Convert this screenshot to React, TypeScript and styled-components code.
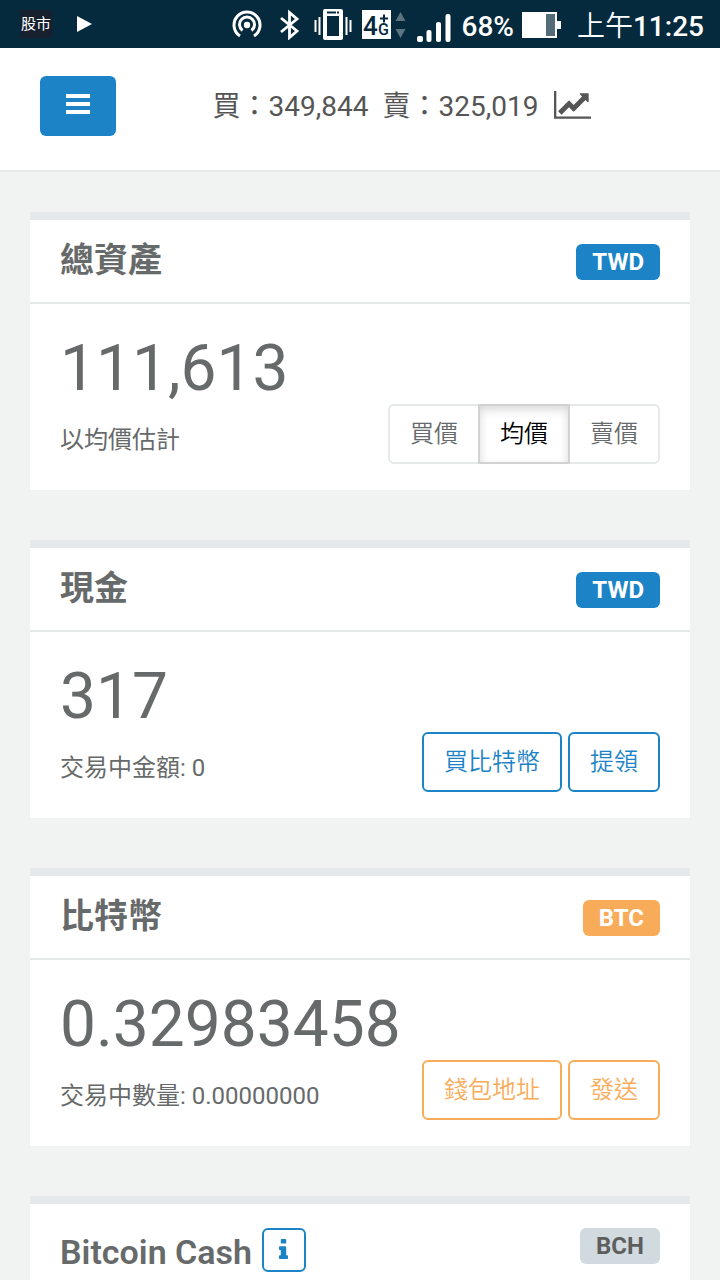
import React, { useState } from "react";
import styled, { createGlobalStyle, css } from "styled-components";

const GlobalStyle = createGlobalStyle`
  *, *::before, *::after { box-sizing: border-box; }
  html, body { margin: 0; padding: 0; height: 100%; }
  body {
    background: #f1f3f3;
    color: #676a6a;
    font-family: Roboto, "Noto Sans CJK TC", sans-serif;
    font-size: 24px;
  }
  #root { height: 100%; }
  button { font: inherit; margin: 0; cursor: pointer; }
  svg { display: block; flex: none; }
`;

const Screen = styled.div`
  height: 100%;
  overflow: hidden;
`;

const StatusBar = styled.div`
  display: flex;
  align-items: center;
  justify-content: space-between;
  height: 48px;
  padding: 0 16px 0 20px;
  background: #062a3d;
  color: #fff;
`;

const StatusGroup = styled.div<{ $gap: number }>`
  display: flex;
  align-items: center;
  gap: ${(p) => p.$gap}px;
`;

const StockBadge = styled.span`
  padding: 0 1px;
  background: #16202f;
  font-size: 15px;
  line-height: 28px;
`;

const StatusText = styled.span`
  font-size: 28px;
  font-weight: 500;
  line-height: 42px;
  padding-top: 6px;
`;

const Clock = styled(StatusText)`
  margin-left: 6px;
`;

const ClockPeriod = styled.span`
  font-weight: 350;
`;

const NavBar = styled.header`
  display: flex;
  padding: 28px 40px 34px;
  background: #fff;
  border-bottom: 2px solid #e5e9e9;
`;

const MenuButton = styled.button`
  display: flex;
  align-items: center;
  justify-content: center;
  width: 76px;
  height: 60px;
  padding: 0 0 4px;
  border: 0;
  border-radius: 6px;
  background: #1c84c6;
`;

const Ticker = styled.div`
  display: flex;
  flex: 1;
  align-items: center;
  justify-content: center;
  gap: 14px;
  padding: 2px 0 0 8px;
  color: #555;
  font-size: 28px;
  line-height: 36px;
`;

const ChartLink = styled.a`
  padding-left: 2px;
  color: #555;
`;

const Content = styled.main`
  display: flex;
  flex-direction: column;
  gap: 50px;
  padding: 40px 30px;
`;

const Card = styled.section`
  background: #fff;
  border-top: 8px solid #e5e9e9;
`;

const CardHeader = styled.div`
  display: flex;
  align-items: flex-start;
  justify-content: space-between;
  padding: 24px 30px 22px;
  border-bottom: 2px solid #e5e9e9;
`;

const TitleGroup = styled.div`
  display: flex;
  align-items: center;
  gap: 10px;
`;

const Title = styled.h2`
  margin: 0;
  font-size: 34px;
  font-weight: 600;
  line-height: 32px;
`;

const LatinTitle = styled(Title)`
  line-height: 40px;
  padding-top: 4px;
`;

const tones = {
  blue: { bg: "#1c84c6", fg: "#fff" },
  orange: { bg: "#f8ac59", fg: "#fff" },
  gray: { bg: "#d1dade", fg: "#5e5e5e" },
};

type Tone = keyof typeof tones;

const Badge = styled.span<{ $tone: Tone }>`
  height: 36px;
  padding: 0 16px;
  border-radius: 6px;
  background: ${(p) => tones[p.$tone].bg};
  color: ${(p) => tones[p.$tone].fg};
  font-size: 24px;
  font-weight: 700;
  line-height: 36px;
`;

const CardBody = styled.div`
  display: flex;
  align-items: flex-end;
  justify-content: space-between;
  padding: 30px 30px 26px;
`;

const Amount = styled.div`
  font-size: 64px;
  line-height: 70px;
`;

const Note = styled.div`
  margin-top: 12px;
  line-height: 48px;
`;

const Actions = styled.div`
  display: flex;
  gap: 6px;
`;

const buttonBox = css`
  height: 60px;
  padding: 0 20px 4px;
  border: 2px solid;
  background: #fff;
  font-family: "Noto Sans CJK TC", sans-serif;
  font-weight: 350;
  line-height: 52px;
  white-space: nowrap;
`;

const OutlineButton = styled.button<{ $tone: Tone }>`
  ${buttonBox}
  border-color: ${(p) => tones[p.$tone].bg};
  border-radius: 6px;
  color: ${(p) => tones[p.$tone].bg};
`;

const InfoButton = styled.button`
  display: flex;
  align-items: center;
  justify-content: center;
  width: 44px;
  height: 44px;
  padding: 0 2px 2px 0;
  border: 2px solid #1c84c6;
  border-radius: 6px;
  background: #fff;
  color: #1c84c6;
`;

const Segments = styled.div`
  display: flex;
`;

const Segment = styled.button<{ $active: boolean }>`
  ${buttonBox}
  border-color: #e5e9e9;
  color: #676a6a;

  & + & { margin-left: -2px; }
  &:first-child { border-radius: 6px 0 0 6px; }
  &:last-child { border-radius: 0 6px 6px 0; }

  ${(p) =>
    p.$active &&
    css`
      z-index: 1;
      border-color: #d2d2d2;
      color: #000;
      box-shadow: inset 0 4px 10px rgba(0, 0, 0, 0.15);
    `}
`;

const HotspotIcon = () => (
  <svg width="30" height="30" viewBox="0 0 30 30" fill="none" stroke="#fff" strokeWidth="3">
    <path d="M8 27a13 13 0 1 1 14 0" />
    <path d="M10.500 21.500a7.500 7.500 0 1 1 9 0" />
    <circle cx="15" cy="16" r="3.200" fill="#fff" stroke="none" />
  </svg>
);

const BluetoothIcon = () => (
  <svg width="26" height="32" viewBox="0 0 26 32" fill="none" stroke="#fff" strokeWidth="2.800">
    <path d="M3 10l16 13-7.500 6.500V4.500L19 11 3 24" />
  </svg>
);

const VibrateIcon = () => (
  <svg width="38" height="34" viewBox="0 0 38 34">
    <path
      fill="#fff"
      fillRule="evenodd"
      d="M11 2h16a2 2 0 0 1 2 2v27a2 2 0 0 1-2 2H11a2 2 0 0 1-2-2V4a2 2 0 0 1 2-2zm2 7v20h12V9zM13 4.500v2h9v-2zm10 0v2h2v-2z"
    />
    <path stroke="#fff" strokeWidth="2" d="M5.500 10v18M1.500 13v12M32.500 10v18M36.500 13v12" />
  </svg>
);

const NetworkIcon = () => (
  <svg width="45" height="36" viewBox="0 -4 45 36">
    <rect width="29" height="29" fill="#fff" />
    <g fill="#062a3d" fontFamily="Roboto, sans-serif" fontWeight="500">
      <text x="1" y="25" fontSize="26">4</text>
      <text x="16" y="25" fontSize="16">G</text>
    </g>
    <path stroke="#062a3d" strokeWidth="2" d="M22 4.500v8M18 8.500h8" />
    <path fill="#5d7480" d="M38.500 2l5 9h-10zM38.500 28l5-9h-10z" />
  </svg>
);

const SignalIcon = () => (
  <svg width="34" height="36" viewBox="0 -7 34 36" fill="#fff">
    <rect x="0" y="23" width="6" height="6" rx="2" />
    <rect x="9.500" y="17" width="5" height="12" rx="2" />
    <rect x="19" y="9" width="5" height="20" rx="2" />
    <rect x="28.500" y="1" width="5" height="28" rx="2" />
  </svg>
);

const BatteryIcon = () => (
  <svg width="39" height="30" viewBox="0 -2 39 30">
    <path fill="#fff" d="M0 1h35v9h4v8h-4v9H0z" />
    <path fill="#546b78" d="M24 3h9v22h-9z" />
  </svg>
);

const PlayIcon = () => (
  <svg width="15" height="16" viewBox="0 0 15 16" fill="#fff">
    <path d="M0 0l15 8-15 8z" />
  </svg>
);

const BarsIcon = () => (
  <svg width="24" height="20" viewBox="0 0 24 20" fill="#fff">
    <path d="M0 0h24v4H0zM0 8h24v4H0zM0 16h24v4H0z" />
  </svg>
);

const ChartIcon = () => (
  <svg width="37" height="32" viewBox="0 128 2048 1771" fill="currentColor">
    <path d="M2048 1536v128H0V128h128v1408h1920zM1920 288v435q0 21-19.500 29.500t-35.500-7.500l-121-121-633 633q-10 10-23 10t-23-10l-233-233-416 416-192-192 585-585q10-10 23-10t23 10l233 233 464-464-121-121q-16-16-7.500-35.500t29.500-19.500h435q14 0 23 9t9 23z" />
  </svg>
);

const InfoIcon = () => (
  <svg width="9" height="20" viewBox="0 128 640 1408" fill="currentColor">
    <path d="M640 1344v128q0 26-19 45t-45 19H64q-26 0-45-19t-19-45v-128q0-26 19-45t45-19h64V896H64q-26 0-45-19T0 832V704q0-26 19-45t45-19h384q26 0 45 19t19 45v576h64q26 0 45 19t19 45zM512 192v192q0 26-19 45t-45 19H192q-26 0-45-19t-19-45V192q0-26 19-45t45-19h256q26 0 45 19t19 45z" />
  </svg>
);

const priceModes = ["買價", "均價", "賣價"];

const balances: {
  title: string;
  unit: string;
  tone: Tone;
  amount: string;
  note: string;
  actions: string[];
}[] = [
  { title: "現金", unit: "TWD", tone: "blue", amount: "317", note: "交易中金額: 0", actions: ["買比特幣", "提領"] },
  {
    title: "比特幣",
    unit: "BTC",
    tone: "orange",
    amount: "0.32983458",
    note: "交易中數量: 0.00000000",
    actions: ["錢包地址", "發送"],
  },
];

export default function App() {
  const [mode, setMode] = useState("均價");

  return (
    <Screen>
      <GlobalStyle />
      <StatusBar>
        <StatusGroup $gap={25}>
          <StockBadge>股市</StockBadge>
          <PlayIcon />
        </StatusGroup>
        <StatusGroup $gap={10}>
          <StatusGroup $gap={16}>
            <HotspotIcon />
            <StatusGroup $gap={10}>
              <BluetoothIcon />
              <VibrateIcon />
              <NetworkIcon />
              <SignalIcon />
            </StatusGroup>
          </StatusGroup>
          <StatusGroup $gap={8}>
            <StatusText>68%</StatusText>
            <BatteryIcon />
          </StatusGroup>
          <Clock>
            <ClockPeriod>上午</ClockPeriod>11:25
          </Clock>
        </StatusGroup>
      </StatusBar>

      <NavBar>
        <MenuButton type="button" aria-label="選單">
          <BarsIcon />
        </MenuButton>
        <Ticker>
          <span>買：349,844</span>
          <span>賣：325,019</span>
          <ChartLink href="#chart" aria-label="走勢圖">
            <ChartIcon />
          </ChartLink>
        </Ticker>
      </NavBar>

      <Content>
        <Card>
          <CardHeader>
            <Title>總資產</Title>
            <Badge $tone="blue">TWD</Badge>
          </CardHeader>
          <CardBody>
            <div>
              <Amount>111,613</Amount>
              <Note>以均價估計</Note>
            </div>
            <Segments role="group">
              {priceModes.map((m) => (
                <Segment
                  key={m}
                  type="button"
                  $active={m === mode}
                  aria-pressed={m === mode}
                  onClick={() => setMode(m)}
                >
                  {m}
                </Segment>
              ))}
            </Segments>
          </CardBody>
        </Card>

        {balances.map((b) => (
          <Card key={b.title}>
            <CardHeader>
              <Title>{b.title}</Title>
              <Badge $tone={b.tone}>{b.unit}</Badge>
            </CardHeader>
            <CardBody>
              <div>
                <Amount>{b.amount}</Amount>
                <Note>{b.note}</Note>
              </div>
              <Actions>
                {b.actions.map((a) => (
                  <OutlineButton key={a} type="button" $tone={b.tone}>
                    {a}
                  </OutlineButton>
                ))}
              </Actions>
            </CardBody>
          </Card>
        ))}

        <Card>
          <CardHeader>
            <TitleGroup>
              <LatinTitle>Bitcoin Cash</LatinTitle>
              <InfoButton type="button" aria-label="說明">
                <InfoIcon />
              </InfoButton>
            </TitleGroup>
            <Badge $tone="gray">BCH</Badge>
          </CardHeader>
        </Card>
      </Content>
    </Screen>
  );
}
